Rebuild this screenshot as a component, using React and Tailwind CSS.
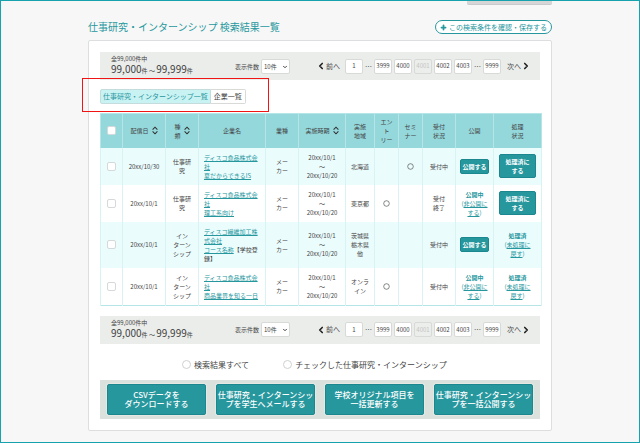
import React, { useState } from 'react';
import { ChevronDown, ChevronLeft, ChevronRight, Plus } from 'lucide-react';

const rows = [
    {
        id: 1,
        date: '20xx/10/30',
        type: '仕事研\n究',
        company: 'ディスコ食品株式会社',
        course: '夏だからできるIS',
        period: '20xx/10/1\n〜\n20xx/10/20',
        area: '北海道',
        entry: false,
        seminar: true,
        status: '受付中',
        published: false,
        processed: false
    },
    {
        id: 2,
        date: '20xx/10/1',
        type: '仕事研\n究',
        company: 'ディスコ食品株式会社',
        course: '理工系向け',
        period: '20xx/10/1\n〜\n20xx/10/20',
        area: '東京都',
        entry: true,
        seminar: false,
        status: '受付\n終了',
        published: true,
        processed: false
    },
    {
        id: 3,
        date: '20xx/10/1',
        type: 'イン\nターン\nシップ',
        company: 'ディスコ繊維加工株式会社',
        course: 'コース名称',
        note: ['【学校登', '録】'],
        period: '20xx/10/1\n〜\n20xx/10/20',
        area: '茨城県\n栃木県\n他',
        entry: false,
        seminar: false,
        status: '受付中',
        published: false,
        processed: true
    },
    {
        id: 4,
        date: '20xx/10/1',
        type: 'イン\nターン\nシップ',
        company: 'ディスコ食品株式会社',
        course: '商品業界を知る一日',
        period: '20xx/10/1\n〜\n20xx/10/20',
        area: 'オンラ\nイン',
        entry: true,
        seminar: false,
        status: '受付中',
        published: true,
        processed: true
    }
];

const bulkActions = [
    'CSVデータを\nダウンロードする',
    '仕事研究・インターンシッ\nプを学生へメールする',
    '学校オリジナル項目を\n一括更新する',
    '仕事研究・インターンシッ\nプを一括公開する'
];

const SortIcon = () => (
    <svg viewBox="0 0 6 9" className="w-[6px] h-[9px] shrink-0" fill="none" stroke="#333" strokeWidth="1.1">
        <path d="M0.6 3.6 L3 1.2 L5.4 3.6" />
        <path d="M0.6 5.4 L3 7.8 L5.4 5.4" />
    </svg>
);

const SortLabel = ({ children }) => (
    <button className="inline-flex items-center justify-center gap-[3px] whitespace-pre-line">
        <span>{children}</span>
        <SortIcon />
    </button>
);

const Check = ({ label }) => (
    <input
        type="checkbox"
        aria-label={label}
        className="block mx-auto w-[9px] h-[9px] appearance-none rounded-[2px] border border-[#d5d9d9] bg-white checked:bg-[#27979e]"
    />
);

const Circle = () => (
    <svg viewBox="0 0 7 7" className="block mx-auto w-[7px] h-[7px]" fill="none" stroke="#555" strokeWidth="0.7">
        <circle cx="3.5" cy="3.5" r="2.8" />
    </svg>
);

const PageButton = ({ children, disabled }) => (
    <button
        disabled={disabled}
        className="w-[18px] h-[15px] rounded-[2px] border border-[#d8dad8] bg-white text-[6px] leading-[12px] text-[#444] disabled:bg-[#eceeec] disabled:text-[#c3c5c3]"
    >
        {children}
    </button>
);

const ResultBar = ({ id }) => (
    <div className="flex items-center h-[28px] pl-[11px] pr-[9px] bg-[#ebedeb] text-[#444]">
        <div className="w-[124px]">
            <p className="text-[6px] leading-[8px]">全99,000件中</p>
            <p className="text-[10px] leading-[12px] whitespace-nowrap">
                99,000<span className="text-[6px]">件 〜 </span>99,999<span className="text-[6px]">件</span>
            </p>
        </div>
        <label htmlFor={id} className="mr-[2px] text-[6px] leading-[9px]">表示件数</label>
        <div className="relative">
            <select
                id={id}
                className="block w-[29px] h-[15px] pl-[2px] appearance-none rounded-[2px] border border-[#d8dad8] bg-white text-[6px]"
            >
                <option>10件</option>
                <option>50件</option>
            </select>
            <ChevronDown className="absolute right-[2px] top-[5px] w-[6px] h-[6px] pointer-events-none" strokeWidth={4} />
        </div>
        <nav className="flex items-center gap-[2px] ml-auto text-[7px] leading-[9px]">
            <button className="flex items-center mr-[3px]">
                <ChevronLeft className="w-[10px] h-[10px] text-[#222]" strokeWidth={4} />
                前へ
            </button>
            <PageButton>1</PageButton>
            <span className="w-[7px] text-center">…</span>
            <PageButton>3999</PageButton>
            <PageButton>4000</PageButton>
            <PageButton disabled>4001</PageButton>
            <PageButton>4002</PageButton>
            <PageButton>4003</PageButton>
            <span className="w-[7px] text-center">…</span>
            <PageButton>9999</PageButton>
            <button className="flex items-center ml-[4px]">
                次へ
                <ChevronRight className="w-[10px] h-[10px] text-[#222]" strokeWidth={4} />
            </button>
        </nav>
    </div>
);

const ActionButton = ({ children }) => (
    <button className="px-[1px] py-[2px] rounded-[2px] border border-[#1d8790] bg-[#27979e] font-bold text-white whitespace-pre-line">
        {children}
    </button>
);

const DoneState = ({ label, action }) => (
    <div className="text-[#27979e]">
        <p className="font-bold">{label}</p>
        <p>
            (<a href="#" className="underline">{action[0]}<br />{action[1]}</a>)
        </p>
    </div>
);

const ResultTable = () => (
    <table className="w-full table-fixed border-collapse border border-[#b5e5e7] text-[6px] leading-[9px] text-[#444] text-center">
        <colgroup>
            <col className="w-[22px]" />
            <col className="w-[43px]" />
            <col className="w-[33px]" />
            <col className="w-[67px]" />
            <col className="w-[33px]" />
            <col className="w-[47px]" />
            <col className="w-[29px]" />
            <col className="w-[24px]" />
            <col className="w-[24px]" />
            <col className="w-[33px]" />
            <col className="w-[38px]" />
            <col className="w-[48px]" />
        </colgroup>
        <thead>
            <tr className="h-[34px] bg-[#94d8dc] whitespace-pre-line [&>th]:font-normal [&>th]:border-x [&>th]:border-[#b5e5e7]">
                <th><Check label="すべて選択" /></th>
                <th><SortLabel>配信日</SortLabel></th>
                <th><SortLabel>{'種\n類'}</SortLabel></th>
                <th>企業名</th>
                <th>業種</th>
                <th><SortLabel>実施時期</SortLabel></th>
                <th>{'実施\n地域'}</th>
                <th>{'エン\nト\nリー'}</th>
                <th>{'セミ\nナー'}</th>
                <th>{'受付\n状況'}</th>
                <th>公開</th>
                <th>{'処理\n状況'}</th>
            </tr>
        </thead>
        <tbody>
            {rows.map((row) => (
                <tr
                    key={row.id}
                    className="odd:bg-[#ebfcfd] whitespace-pre-line [&>td]:py-[5px] [&>td]:border-x [&>td]:border-[#d9f3f4]"
                >
                    <td><Check label={row.company} /></td>
                    <td>{row.date}</td>
                    <td>{row.type}</td>
                    <td className="pl-[5px] pr-[4px] text-left">
                        <a href="#" className="text-[#27979e] underline">{row.company}</a>
                        <br />
                        <a href="#" className="text-[#27979e] underline">{row.course}</a>
                        {row.note && <>{row.note[0]}<br />{row.note[1]}</>}
                    </td>
                    <td>{'メー\nカー'}</td>
                    <td>{row.period}</td>
                    <td>{row.area}</td>
                    <td>{row.entry && <Circle />}</td>
                    <td>{row.seminar && <Circle />}</td>
                    <td>{row.status}</td>
                    <td>
                        {row.published
                            ? <DoneState label="公開中" action={['非公開に', 'する']} />
                            : <ActionButton>公開する</ActionButton>}
                    </td>
                    <td className="px-[5px]">
                        {row.processed
                            ? <DoneState label="処理済" action={['未処理に', '戻す']} />
                            : (
                                <div className="grid">
                                    <ActionButton>{'処理済に\nする'}</ActionButton>
                                </div>
                            )}
                    </td>
                </tr>
            ))}
        </tbody>
    </table>
);

const App = () => {
    const [target, setTarget] = useState('');

    return (
        <div className="min-h-screen px-[87px] pb-[10px] border border-[#16a3ae] bg-[#f7f7f7] font-['Noto_Sans_CJK_JP',sans-serif]">
            <div className="flex justify-end">
                <div className="w-[85px] h-[4px] rounded-b-[2px] border-b border-[#c8cacc] bg-[#d6d6d6]" />
            </div>

            <header className="flex items-center justify-between mt-[14px] mb-[5px]">
                <h1 className="text-[10px] leading-[16px] text-[#27979e]">仕事研究・インターンシップ 検索結果一覧</h1>
                <button className="flex items-center gap-[2px] h-[14px] px-[4px] rounded-full border border-[#27979e] bg-white text-[7px] leading-[12px] text-[#27979e]">
                    <Plus className="w-[7px] h-[7px]" strokeWidth={6} />
                    この検索条件を確認・保存する
                </button>
            </header>

            <main className="p-[11px] rounded-[2px] border border-[#dcdedf] bg-white">
                <ResultBar id="per-page-top" />

                <div className="relative my-[9px]">
                    <div className="flex h-[15px] text-[7px] leading-[13px] whitespace-nowrap">
                        <button className="px-[2px] rounded-l-[2px] border border-[#c5dcdc] bg-[#c9f2f3] text-[#27979e]">
                            仕事研究・インターンシップ一覧
                        </button>
                        <button className="px-[3px] rounded-r-[2px] border border-l-0 border-[#d8dad8] bg-white text-[#444]">
                            企業一覧
                        </button>
                    </div>
                    <div className="absolute -left-[18px] -top-[11px] w-[187px] h-[34px] border border-[#f01414] pointer-events-none" />
                </div>

                <ResultTable />

                <div className="mt-[10px]">
                    <ResultBar id="per-page-bottom" />
                </div>

                <div className="flex items-center gap-[34px] h-[36px] pt-[6px] pl-[82px] text-[8px] leading-[12px] text-[#444]">
                    {['検索結果すべて', 'チェックした仕事研究・インターンシップ'].map((label) => (
                        <label key={label} className="flex items-center gap-[3px] whitespace-nowrap">
                            <input
                                type="radio"
                                name="target"
                                value={label}
                                checked={target === label}
                                onChange={(e) => setTarget(e.target.value)}
                                className="w-[9px] h-[9px] appearance-none rounded-full border border-[#cfd2d2] bg-white checked:bg-[#27979e]"
                            />
                            {label}
                        </label>
                    ))}
                </div>

                <div className="grid grid-cols-4 gap-[10px] px-[7px] py-[4px] bg-[#dbe2dd]">
                    {bulkActions.map((label) => (
                        <button
                            key={label}
                            className="h-[31px] rounded-[2px] border border-[#1d8790] bg-[#27979e] shadow-[0_0_0_1px_#e6e8e3] text-[8px] leading-[9px] font-medium text-white whitespace-pre"
                        >
                            {label}
                        </button>
                    ))}
                </div>
            </main>
        </div>
    );
};

export default App;
